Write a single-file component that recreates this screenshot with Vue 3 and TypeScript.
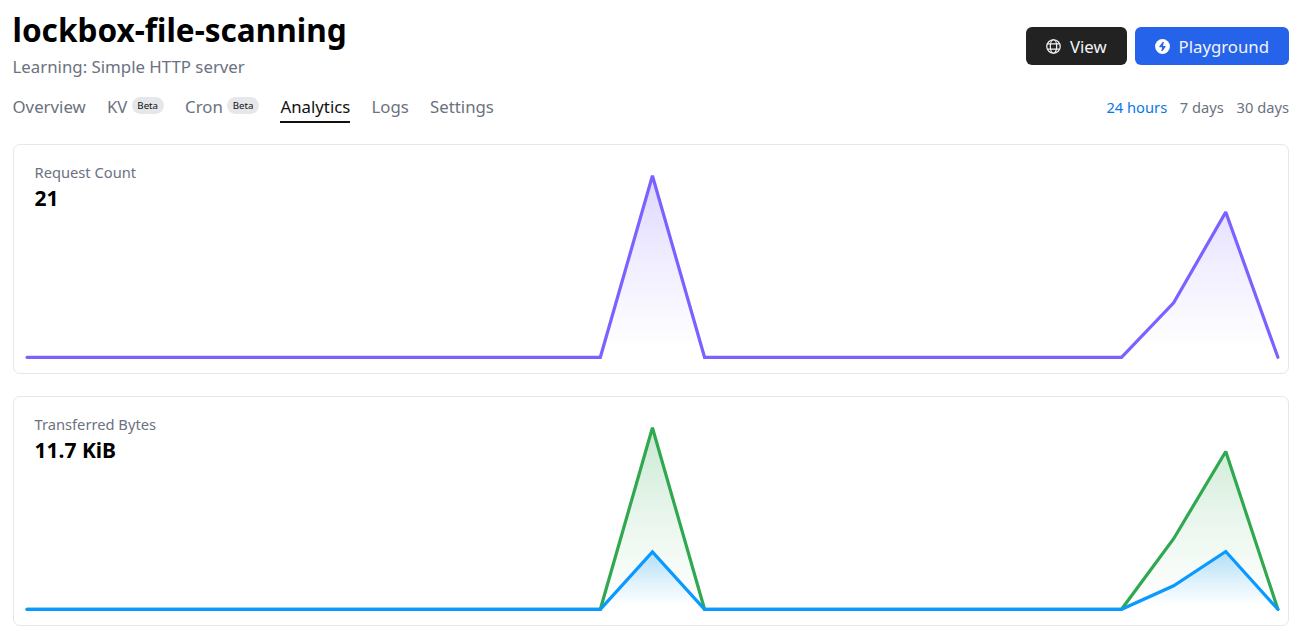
<script setup lang="ts">
interface Series {
  id: string
  color: string
  opacity: number
  values: number[]
}

interface Chart {
  title: string
  total: string
  max: number
  series: Series[]
}

const tabs = [
  { label: 'Overview' },
  { label: 'KV', beta: true },
  { label: 'Cron', beta: true },
  { label: 'Analytics', active: true },
  { label: 'Logs' },
  { label: 'Settings' },
]

const ranges = ['24 hours', '7 days', '30 days']

const hourly = (noon: number, late: number, last: number): number[] => {
  const values = new Array<number>(25).fill(0)
  values[12] = noon
  values[22] = late
  values[23] = last
  return values
}

const charts: Chart[] = [
  {
    title: 'Request Count',
    total: '21',
    max: 10,
    series: [{ id: 'requests', color: '#7b61ff', opacity: 0.25, values: hourly(10, 3, 8) }],
  },
  {
    title: 'Transferred Bytes',
    total: '11.7 KiB',
    max: 180,
    series: [
      { id: 'sent', color: '#2fa84f', opacity: 0.25, values: hourly(180, 70, 156.5) },
      { id: 'received', color: '#0a99ff', opacity: 0.28, values: hourly(57, 23.3, 57.3) },
    ],
  },
]

const left = 13
const step = 52.12
const base = 212.3
const height = 181.5

const yOf = (value: number, max: number) => base - (value / max) * height

const points = (s: Series, max: number) =>
  s.values.map((v, i) => `${(left + i * step).toFixed(2)},${yOf(v, max).toFixed(2)}`).join(' ')

const area = (s: Series, max: number) =>
  `${left},${base} ${points(s, max)} ${left + 24 * step},${base}`

const top = (s: Series, max: number) => yOf(Math.max(...s.values), max)
</script>

<template>
  <main class="page">
    <header class="header">
      <div>
        <h1 class="title">lockbox-file-scanning</h1>
        <p class="subtitle">Learning: Simple HTTP server</p>
      </div>
      <div class="actions">
        <button class="button dark">
          <svg class="icon" viewBox="0 0 16 16" fill="none" stroke="currentColor" stroke-width="1.3">
            <circle cx="8" cy="8" r="7.2" />
            <ellipse cx="8" cy="8" rx="3.4" ry="7.2" />
            <path d="M1.6 5.3h12.8M1.6 10.7h12.8" />
          </svg>
          <span>View</span>
        </button>
        <button class="button blue">
          <svg class="icon" viewBox="0 0 16 16">
            <circle cx="8" cy="8" r="7.9" fill="#fff" />
            <path
              d="M9 3.3 5.3 8.1H10.6L7.2 12.6"
              fill="none"
              stroke="#2563eb"
              stroke-width="1.5"
              stroke-linejoin="round"
            />
            <path d="M9.2 3 8.5 8H6.2zM7 13l.6-5h2.3z" fill="#2563eb" />
          </svg>
          <span>Playground</span>
        </button>
      </div>
    </header>

    <div class="bar">
      <nav class="tabs">
        <a v-for="tab in tabs" :key="tab.label" class="tab" :class="{ active: tab.active }">
          <span>{{ tab.label }}</span>
          <span v-if="tab.beta" class="badge">Beta</span>
        </a>
      </nav>
      <div class="ranges">
        <a v-for="(range, i) in ranges" :key="range" class="range" :class="{ selected: i === 0 }">{{ range }}</a>
      </div>
    </div>

    <section v-for="chart in charts" :key="chart.title" class="card">
      <svg class="chart" viewBox="0 0 1274 229">
        <defs>
          <linearGradient
            v-for="s in chart.series"
            :id="s.id"
            :key="s.id"
            gradientUnits="userSpaceOnUse"
            x1="0"
            x2="0"
            :y1="top(s, chart.max)"
            :y2="base"
          >
            <stop offset="0" :stop-color="s.color" :stop-opacity="s.opacity" />
            <stop offset="0.5" :stop-color="s.color" :stop-opacity="s.opacity * 0.42" />
            <stop offset="0.95" :stop-color="s.color" stop-opacity="0" />
          </linearGradient>
        </defs>
        <g v-for="s in chart.series" :key="s.id">
          <polygon :points="area(s, chart.max)" :fill="`url(#${s.id})`" />
          <polyline
            :points="points(s, chart.max)"
            fill="none"
            :stroke="s.color"
            stroke-width="3.2"
            stroke-linecap="round"
            stroke-linejoin="miter"
            stroke-miterlimit="2"
          />
        </g>
      </svg>
      <div class="summary">
        <div class="label">{{ chart.title }}</div>
        <div class="total">{{ chart.total }}</div>
      </div>
    </section>
  </main>
</template>

<style>
body {
  background: #fff;
}
</style>

<style scoped>
.page {
  box-sizing: border-box;
  width: 1306px;
  height: 638px;
  overflow: hidden;
  padding: 8px 17px 0 12.5px;
  font-family: 'Noto Sans', sans-serif;
  color: #000;
}
.header {
  display: flex;
  justify-content: space-between;
  height: 83px;
}
.title {
  margin: 0;
  font-size: 31.55px;
  line-height: 43px;
  font-weight: 700;
}
.subtitle {
  margin: 3px 0 0;
  font-size: 16.82px;
  line-height: 26px;
  color: #6b7280;
}
.actions {
  display: flex;
  gap: 8.3px;
  padding-top: 19px;
}
.button {
  box-sizing: border-box;
  display: flex;
  align-items: center;
  gap: 8.7px;
  height: 38px;
  padding: 0 20px;
  border: 0;
  border-radius: 6px;
  font-family: inherit;
  font-size: 16.75px;
  color: #f3f4f6;
}
.dark {
  background: #222;
}
.blue {
  background: #2563eb;
}
.icon {
  width: 15px;
  height: 15px;
}
.bar {
  display: flex;
  justify-content: space-between;
  height: 52.5px;
}
.tabs {
  display: flex;
  gap: 21.2px;
}
.tab {
  box-sizing: border-box;
  display: flex;
  height: 32px;
  gap: 4.2px;
  font-size: 16.8px;
  line-height: 31px;
  color: #6b7280;
}
.active {
  color: #111;
  border-bottom: 2px solid #111;
}
.badge {
  height: 17px;
  margin-top: 6px;
  padding: 0 5.8px;
  border-radius: 9px;
  background: #e5e7eb;
  font-size: 9.7px;
  line-height: 18px;
  color: #111;
}
.ranges {
  display: flex;
  gap: 12.7px;
  font-size: 14.7px;
  line-height: 32px;
  color: #6b7280;
}
.selected {
  color: #0a77e8;
}
.card {
  box-sizing: border-box;
  display: grid;
  height: 230.6px;
  margin-bottom: 21.5px;
  border: 1px solid #e5e7eb;
  border-radius: 7px;
}
.chart,
.summary {
  grid-area: 1 / 1;
}
.chart {
  width: 1274px;
  height: 229px;
}
.summary {
  padding: 16px 21px;
}
.label {
  font-size: 14.7px;
  line-height: 22px;
  color: #6b7280;
}
.total {
  font-size: 21px;
  line-height: 30px;
  font-weight: 700;
}
</style>
